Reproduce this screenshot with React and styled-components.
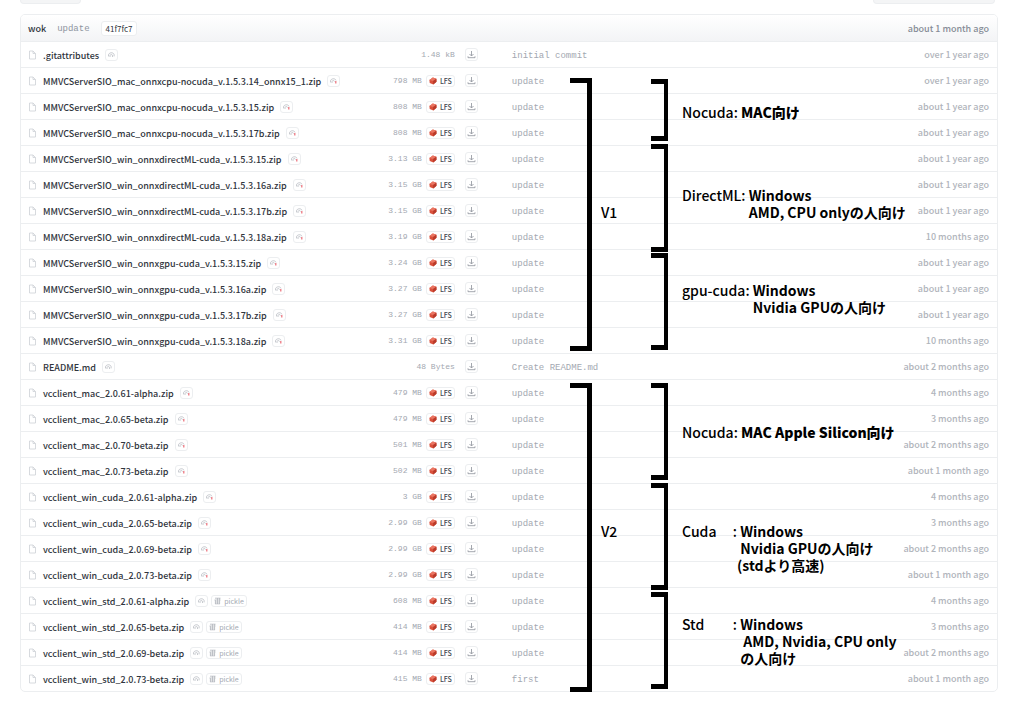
import React from 'react';
import styled, { createGlobalStyle } from 'styled-components';

const fontSans = "'Noto Sans CJK JP', 'Noto Sans', sans-serif";
const fontMono = "'Liberation Mono', monospace";
const colorText = '#30353d';
const colorMuted = '#a3a8b1';
const colorTime = '#b0b4bb';
const colorBorder = '#eceef0';

const GlobalStyle = createGlobalStyle`
  body {
    margin: 0;
    background: #fff;
    font-family: ${fontSans};
    color: ${colorText};
  }
`;

const Page = styled.main`
  position: relative;
  box-sizing: border-box;
  padding: 0 26px 24px 20px;
`;

const TopBar = styled.div`
  display: flex;
  justify-content: space-between;
  padding-right: 3px;
  margin-bottom: 10px;
`;

const TopBarEdge = styled.div`
  box-sizing: border-box;
  width: ${({ $wide }) => ($wide ? 122 : 61)}px;
  height: 4px;
  border: 1px solid ${colorBorder};
  border-top: 0;
  border-radius: 0 0 4px 4px;
  background: #f4f5f6;
`;

const Card = styled.section`
  border: 1px solid ${colorBorder};
  border-radius: 5px;
  overflow: hidden;
`;

const CommitBar = styled.header`
  display: flex;
  align-items: center;
  gap: 11px;
  height: 26px;
  padding: 0 8px 0 7px;
  background: linear-gradient(#fff, #f3f4f6);
  font-size: 9px;
  line-height: 14px;
`;

const Author = styled.a`
  padding-top: 1px;
  color: ${colorText};
  font-weight: 500;
  text-decoration: none;
`;

const CommitMessage = styled.a`
  padding-top: 2px;
  color: #8f959f;
  font-family: ${fontMono};
  text-decoration: none;
`;

const CommitHash = styled.a`
  padding: 0 4px;
  border: 1px solid ${colorBorder};
  border-radius: 3px;
  background: #fff;
  color: ${colorText};
  font-size: 8px;
  line-height: 13px;
  text-decoration: none;
`;

const CommitTime = styled.time`
  margin-left: auto;
  padding-top: 1px;
  color: #868c96;
  font-weight: 500;
`;

const FileTable = styled.table`
  width: 100%;
  table-layout: fixed;
  border-collapse: separate;
  border-spacing: 0;
`;

const Column = styled.col`
  width: ${({ $width }) => $width};
`;

const Cell = styled.td`
  box-sizing: border-box;
  height: 26px;
  padding: 0;
  border-top: 1px solid ${colorBorder};
  color: ${colorMuted};
  font-size: 9px;
  line-height: 14px;
  white-space: nowrap;
`;

const TimeCell = styled(Cell)`
  padding: 1px 8px 0 0;
  color: ${colorTime};
  font-weight: 500;
  text-align: right;
`;

const MessageCell = styled(Cell)`
  padding-top: 2px;
  font-family: ${fontMono};
`;

const NameGroup = styled.div`
  display: flex;
  align-items: center;
  gap: 6px;
  padding-left: 7px;
`;

const FileLink = styled.a`
  padding-top: 2px;
  color: ${colorText};
  font-weight: 500;
  text-decoration: none;
`;

const SizeGroup = styled.div`
  display: flex;
  align-items: center;
  justify-content: flex-end;
  gap: 4px;
  font-family: ${fontMono};
  font-size: 8px;
`;

const Badge = styled.span`
  display: flex;
  align-items: center;
  gap: 3px;
  box-sizing: border-box;
  height: 12px;
  padding: 0 2px;
  border: 1px solid ${colorBorder};
  border-radius: 3px;
  font-family: ${fontSans};
  font-size: 7px;
`;

const BadgeGroup = styled.span`
  display: flex;
  gap: 3px;
`;

const LfsBadge = styled(Badge)`
  color: #3f4550;
  font-weight: 500;
`;

const DownloadButton = styled.button`
  display: flex;
  align-items: center;
  justify-content: center;
  box-sizing: border-box;
  width: 13px;
  height: 13px;
  margin-left: 10px;
  padding: 0;
  border: 1px solid ${colorBorder};
  border-radius: 3px;
  background: #fff;
  color: #8b9099;
`;

// Notes drawn freely over the file list
const Bracket = styled.div`
  position: absolute;
  left: ${({ $major }) => ($major ? 570 : 651)}px;
  top: ${({ $top }) => $top}px;
  box-sizing: border-box;
  width: ${({ $major }) => ($major ? 22 : 17)}px;
  height: ${({ $height }) => $height}px;
  border: solid #000;
  border-width: 5px ${({ $major }) => ($major ? 5 : 4)}px 5px 0;
`;

const Note = styled.div`
  position: absolute;
  left: ${({ $major }) => ($major ? 601 : 682)}px;
  top: ${({ $top }) => $top}px;
  display: flex;
  color: #000;
  font-size: 14px;
  line-height: 17px;
  white-space: pre;
`;

const Term = styled.span`
  display: flex;
  justify-content: space-between;
  min-width: ${({ $wide }) => ($wide ? '55px' : '0')};
  font-weight: 500;
`;

const Lines = styled.strong`
  font-weight: ${({ $heavy }) => ($heavy ? 900 : 700)};
`;

const Icon = styled.svg`
  flex-shrink: 0;
  fill: none;
  stroke-width: 0.8;
`;

const FileIcon = () => (
  <Icon width="9" height="10" viewBox="0 0 9 10" stroke="#cdd1d6">
    <path d="M1.5 1H5L7.5 3.5V9H1.5Z" />
    <path d="M5 1V3.5H7.5" />
  </Icon>
);

const ScanIcon = ({ flagged }) => (
  <Icon width="7" height="8" viewBox="0 0 7 8" stroke="#b9bdc3">
    <path d="M0.5 5.4V4C0.8 1.3 5.4 1 6 3.4" />
    <path d="M2 6V4.6C2.2 3.2 4.4 3.2 4.5 4.6" />
    {flagged ? (
      <path d="M5.8 4V6.4" stroke="#ec6b76" strokeWidth="1.2" />
    ) : (
      <path d="M6.1 3.4V5.4M4.5 4.4V6" />
    )}
  </Icon>
);

const CubeIcon = () => (
  <Icon width="8" height="8" viewBox="0 0 8 8">
    <path d="M0.4 3L3.8 0.6L7.4 1.7L7.5 4.8L4.3 7.4L0.7 6Z" fill="#d9503b" />
    <path d="M0.4 3L3.8 0.6L7.4 1.7L4.1 4Z" fill="#ea7663" />
    <path d="M4.1 4L7.4 1.7L7.5 4.8L4.3 7.4Z" fill="#b93a2a" />
  </Icon>
);

const PickleIcon = () => (
  <Icon width="7" height="8" viewBox="0 0 7 8" stroke="#b4b8be">
    <path d="M1 1.2H6.5M0.5 3H6.5M1.4 3V7M3.5 1V7M5.6 1V7M1 5H6M1 6.8H6" />
  </Icon>
);

const DownloadIcon = () => (
  <Icon width="9" height="9" viewBox="0 0 9 9" stroke="currentColor">
    <path d="M4.5 1V5.8M2.5 4L4.5 6L6.5 4M1 6.3V7.7H8V6.3" />
  </Icon>
);

const yearAgo = 'about 1 year ago';

// name, size, message, time, kind
const files = [
  ['.gitattributes', '1.48 kB', 'initial commit', 'over 1 year ago', 'plain'],
  ['MMVCServerSIO_mac_onnxcpu-nocuda_v.1.5.3.14_onnx15_1.zip', '798 MB', 'update', 'over 1 year ago', 'zip'],
  ['MMVCServerSIO_mac_onnxcpu-nocuda_v.1.5.3.15.zip', '808 MB', 'update', yearAgo, 'zip'],
  ['MMVCServerSIO_mac_onnxcpu-nocuda_v.1.5.3.17b.zip', '808 MB', 'update', yearAgo, 'zip'],
  ['MMVCServerSIO_win_onnxdirectML-cuda_v.1.5.3.15.zip', '3.13 GB', 'update', yearAgo, 'zip'],
  ['MMVCServerSIO_win_onnxdirectML-cuda_v.1.5.3.16a.zip', '3.15 GB', 'update', yearAgo, 'zip'],
  ['MMVCServerSIO_win_onnxdirectML-cuda_v.1.5.3.17b.zip', '3.15 GB', 'update', yearAgo, 'zip'],
  ['MMVCServerSIO_win_onnxdirectML-cuda_v.1.5.3.18a.zip', '3.19 GB', 'update', '10 months ago', 'zip'],
  ['MMVCServerSIO_win_onnxgpu-cuda_v.1.5.3.15.zip', '3.24 GB', 'update', yearAgo, 'zip'],
  ['MMVCServerSIO_win_onnxgpu-cuda_v.1.5.3.16a.zip', '3.27 GB', 'update', yearAgo, 'zip'],
  ['MMVCServerSIO_win_onnxgpu-cuda_v.1.5.3.17b.zip', '3.27 GB', 'update', yearAgo, 'zip'],
  ['MMVCServerSIO_win_onnxgpu-cuda_v.1.5.3.18a.zip', '3.31 GB', 'update', '10 months ago', 'zip'],
  ['README.md', '48 Bytes', 'Create README.md', 'about 2 months ago', 'plain'],
  ['vcclient_mac_2.0.61-alpha.zip', '479 MB', 'update', '4 months ago', 'zip'],
  ['vcclient_mac_2.0.65-beta.zip', '479 MB', 'update', '3 months ago', 'zip'],
  ['vcclient_mac_2.0.70-beta.zip', '501 MB', 'update', 'about 2 months ago', 'zip'],
  ['vcclient_mac_2.0.73-beta.zip', '502 MB', 'update', 'about 1 month ago', 'zip'],
  ['vcclient_win_cuda_2.0.61-alpha.zip', '3 GB', 'update', '4 months ago', 'zip'],
  ['vcclient_win_cuda_2.0.65-beta.zip', '2.99 GB', 'update', '3 months ago', 'zip'],
  ['vcclient_win_cuda_2.0.69-beta.zip', '2.99 GB', 'update', 'about 2 months ago', 'zip'],
  ['vcclient_win_cuda_2.0.73-beta.zip', '2.99 GB', 'update', 'about 1 month ago', 'zip'],
  ['vcclient_win_std_2.0.61-alpha.zip', '608 MB', 'update', '4 months ago', 'pickle'],
  ['vcclient_win_std_2.0.65-beta.zip', '414 MB', 'update', '3 months ago', 'pickle'],
  ['vcclient_win_std_2.0.69-beta.zip', '414 MB', 'update', 'about 2 months ago', 'pickle'],
  ['vcclient_win_std_2.0.73-beta.zip', '415 MB', 'first', 'about 1 month ago', 'pickle'],
];

const brackets = [
  { top: 78, height: 273, major: true },
  { top: 79, height: 62 },
  { top: 144, height: 108 },
  { top: 253, height: 97 },
  { top: 383, height: 309, major: true },
  { top: 383, height: 97 },
  { top: 483, height: 107 },
  { top: 592, height: 97 },
];

const notes = [
  { top: 204, term: 'V1', major: true },
  { top: 104, term: 'Nocuda:', text: ' MAC向け', heavy: true },
  { top: 187, term: 'DirectML:', text: ' Windows\n AMD, CPU onlyの人向け' },
  { top: 282, term: 'gpu-cuda:', text: ' Windows\n Nvidia GPUの人向け' },
  { top: 523, term: 'V2', major: true },
  { top: 424, term: 'Nocuda:', text: ' MAC Apple Silicon向け', heavy: true },
  { top: 523, term: 'Cuda', text: ' Windows\n Nvidia GPUの人向け\n(stdより高速)', wide: true },
  { top: 616, term: 'Std', text: ' Windows\n  AMD, Nvidia, CPU only\n の人向け', wide: true },
];

const FileRow = ({ name, size, message, time, kind }) => (
  <tr>
    <Cell>
      <NameGroup>
        <FileIcon />
        <FileLink href="#">{name}</FileLink>
        <BadgeGroup>
          <Badge><ScanIcon flagged={kind === 'zip'} /></Badge>
          {kind === 'pickle' && <Badge><PickleIcon />pickle</Badge>}
        </BadgeGroup>
      </NameGroup>
    </Cell>
    <Cell>
      <SizeGroup>
        {size}
        {kind !== 'plain' && <LfsBadge><CubeIcon />LFS</LfsBadge>}
      </SizeGroup>
    </Cell>
    <Cell>
      <DownloadButton type="button" aria-label="Download"><DownloadIcon /></DownloadButton>
    </Cell>
    <MessageCell>{message}</MessageCell>
    <TimeCell>{time}</TimeCell>
  </tr>
);

const App = () => (
  <Page>
    <GlobalStyle />
    <TopBar>
      <TopBarEdge />
      <TopBarEdge $wide />
    </TopBar>
    <Card>
      <CommitBar>
        <Author href="#">wok</Author>
        <CommitMessage href="#">update</CommitMessage>
        <CommitHash href="#">41f7fc7</CommitHash>
        <CommitTime>about 1 month ago</CommitTime>
      </CommitBar>
      <FileTable>
        <colgroup>
          <Column $width="34%" />
          <Column $width="102px" />
          <Column $width="57px" />
          <Column $width="auto" />
          <Column $width="150px" />
        </colgroup>
        <tbody>
          {files.map(([name, size, message, time, kind]) => (
            <FileRow key={name} name={name} size={size} message={message} time={time} kind={kind} />
          ))}
        </tbody>
      </FileTable>
    </Card>
    {brackets.map(({ top, height, major }) => (
      <Bracket key={`${top}-${height}`} $top={top} $height={height} $major={major} />
    ))}
    {notes.map(({ top, term, text, major, wide, heavy }) => (
      <Note key={`${term}-${top}`} $top={top} $major={major}>
        <Term $wide={wide}>
          <span>{term}</span>
          {wide && <span>:</span>}
        </Term>
        {text && <Lines $heavy={heavy}>{text}</Lines>}
      </Note>
    ))}
  </Page>
);

export default App;
